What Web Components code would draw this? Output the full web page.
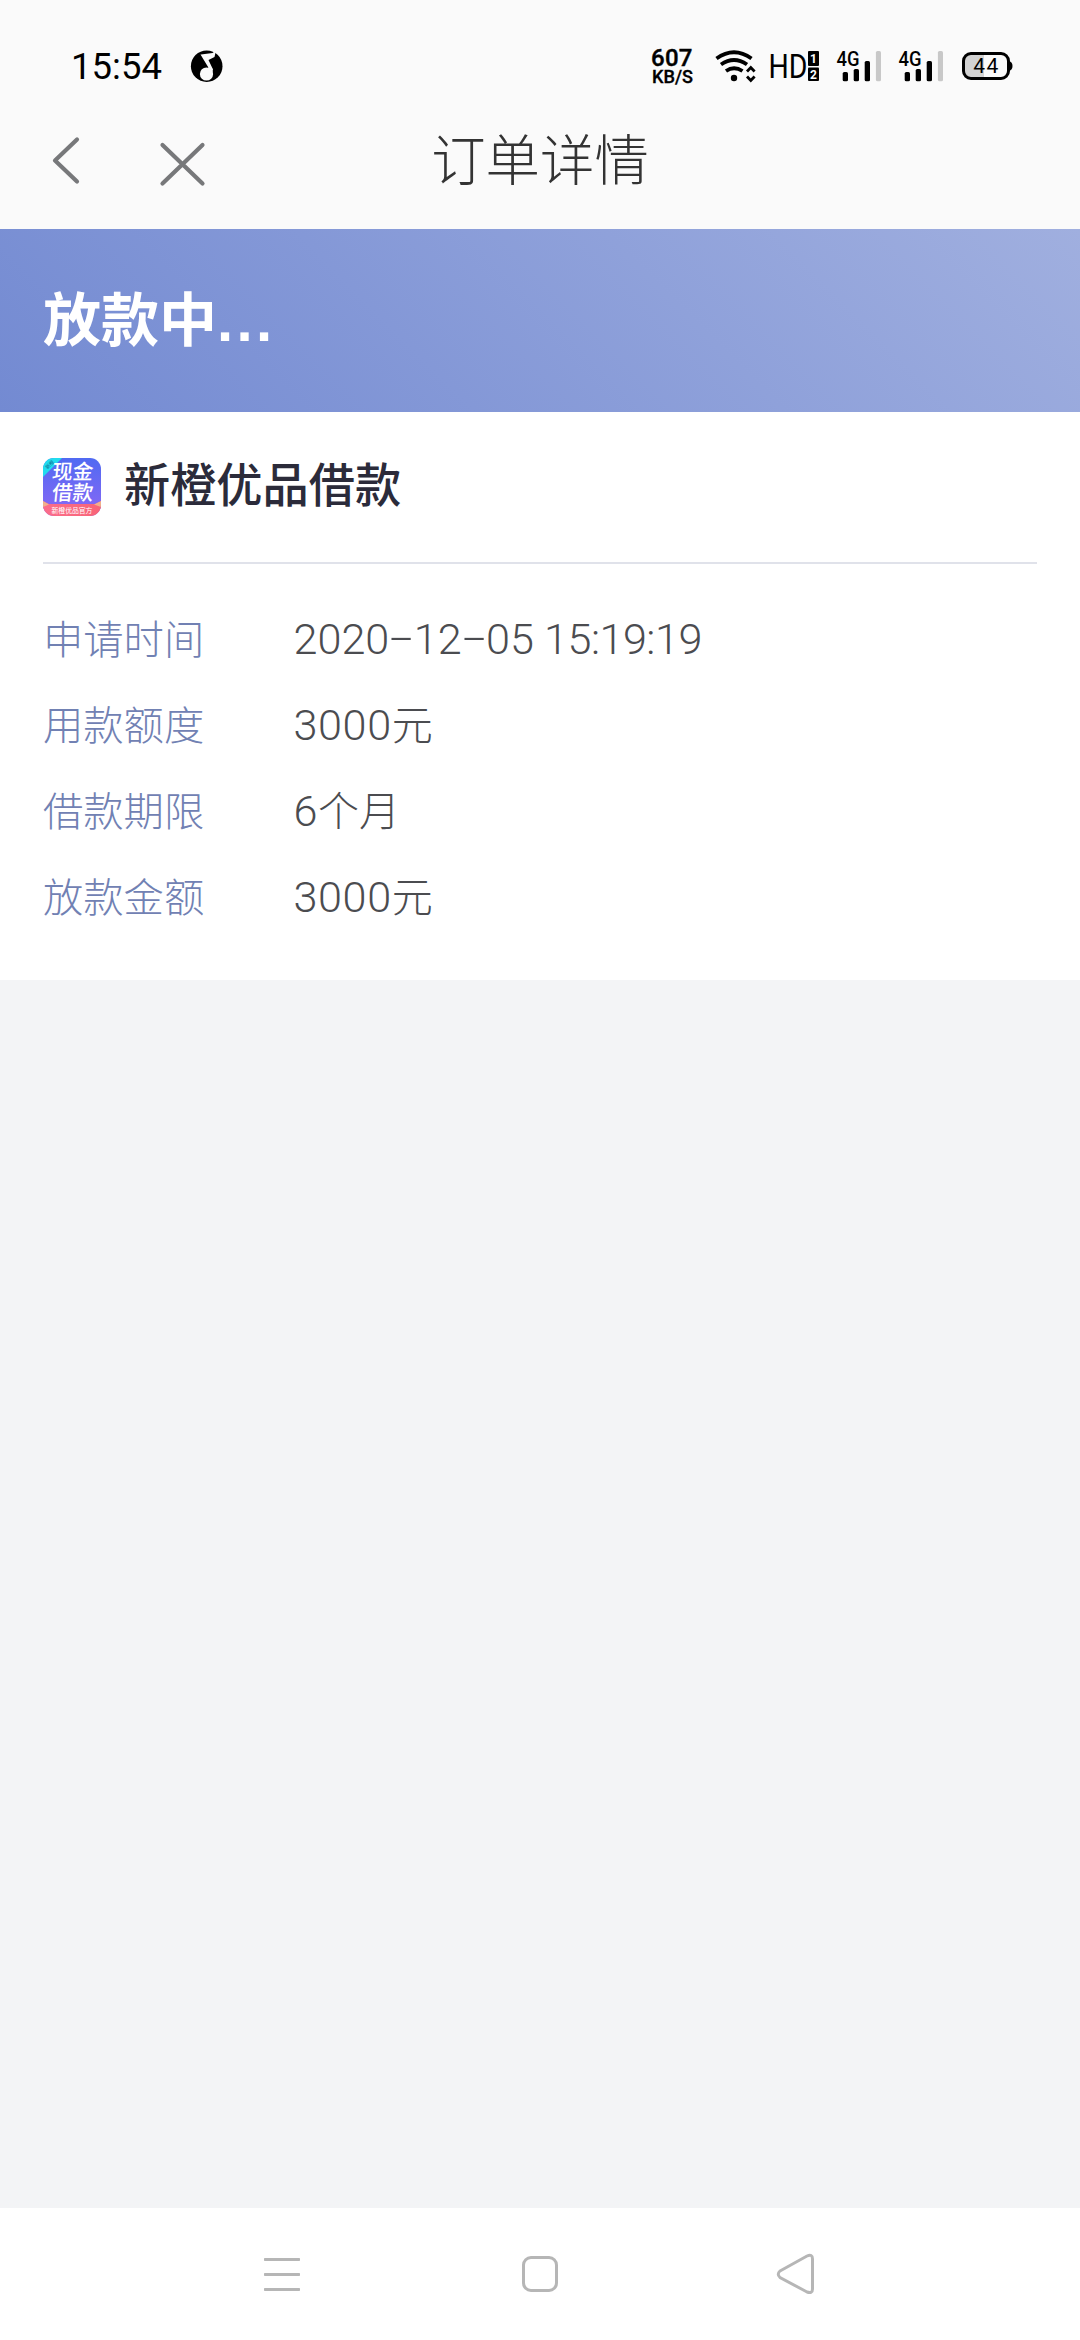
<!DOCTYPE html>
<html lang="zh-CN">
<head>
<meta charset="utf-8">
<title>订单详情</title>
<style>
    body {
        margin: 0;
        background: #f3f4f6;
        font-family: Roboto, "Noto Sans CJK SC", sans-serif;
    }
</style>
</head>
<body>
<order-page></order-page>

<script>
class StatusBar extends HTMLElement {
    constructor() {
        super();
        this.attachShadow({ mode: 'open' });
    }

    connectedCallback() {
        this.shadowRoot.innerHTML = `
            <style>
                :host {
                    display: flex;
                    justify-content: space-between;
                    height: 110px;
                    padding: 0 65px 0 70px;
                    box-sizing: border-box;
                    background: #fafafa;
                }
                .side {
                    display: flex;
                    align-items: flex-start;
                    padding-top: 36px;
                }
                svg { display: block; }
            </style>
            <div class="side">
                <svg width="114" height="60" viewBox="70 36 114 60">
                    <text x="71" y="79" font-size="36.5" textLength="91" lengthAdjust="spacing">15:54</text>
                </svg>
                <svg width="40" height="60" viewBox="184 36 40 60">
                    <circle cx="206.7" cy="66.2" r="15.8"/>
                    <path d="M201 54.5 L212.5 53 L216 50.5 L214.5 57 L208.5 60 L213 69.5 L209 68.5 L200.5 54.5Z" fill="#fafafa"/>
                    <circle cx="206.5" cy="74" r="6.6" fill="#fafafa"/>
                    <path d="M208 67 L213 69 L212 75Z" fill="#fafafa"/>
                </svg>
            </div>
            <div class="side">
                <svg width="62" height="60" viewBox="647 36 62 60">
                    <text x="650" y="66" font-size="24" font-weight="500" stroke="#000" stroke-width=".4" textLength="41.5">607</text>
                    <text x="651" y="83" font-size="17.5" font-weight="500" stroke="#000" stroke-width=".3" textLength="41" lengthAdjust="spacingAndGlyphs">KB/S</text>
                </svg>
                <svg width="54" height="60" viewBox="709 36 54 60" fill="none" stroke="#000" stroke-width="3.8">
                    <path d="M715.5 58.5 Q733 46 750.5 58.5"/>
                    <path d="M720 64.5 Q733 55.5 746 64.5"/>
                    <path d="M725 71 Q733 65.5 741.5 71"/>
                    <circle cx="733" cy="78" r="3.2" fill="#000" stroke="none"/>
                    <path d="M746 71.5 L749.8 67.5 L753.6 71.5 M746 76.5 L749.8 80.5 L753.6 76.5" stroke-width="2.8"/>
                </svg>
                <svg width="67" height="60" viewBox="763 36 67 60">
                    <text x="767.5" y="78" font-size="33.5" textLength="39" lengthAdjust="spacingAndGlyphs">HD</text>
                    <rect x="807" y="51" width="11" height="15" rx="1"/>
                    <rect x="807" y="67.5" width="11" height="13.5" rx="1"/>
                    <text x="812.5" y="63" font-size="12" font-weight="700" fill="#fff" text-anchor="middle">1</text>
                    <text x="812.5" y="78.5" font-size="12" font-weight="700" fill="#fff" text-anchor="middle">2</text>
                </svg>
                <signal-bars></signal-bars>
                <signal-bars></signal-bars>
                <svg width="60" height="60" viewBox="954 36 60 60">
                    <rect x="962.5" y="53.5" width="45" height="25" rx="7.5" fill="#fafafa"/>
                    <path d="M983 54 V78 H970 Q963 78 963 71 V61 Q963 54 970 54Z" fill="#d2d2d2"/>
                    <rect x="962.5" y="53.5" width="45" height="25" rx="7.5" fill="none" stroke="#000" stroke-width="3"/>
                    <path d="M1008 61 Q1011.5 62 1011.5 66 Q1011.5 70 1008 71Z"/>
                    <text x="984.8" y="73" font-size="21" text-anchor="middle" textLength="25">44</text>
                </svg>
            </div>
        `;
    }
}

class SignalBars extends HTMLElement {
    constructor() {
        super();
        this.attachShadow({ mode: 'open' });
    }

    connectedCallback() {
        this.shadowRoot.innerHTML = `
            <style>
                :host { display: block; width: 62px; height: 60px; }
                svg { display: block; }
            </style>
            <svg width="62" height="60" viewBox="0 -10 62 60">
                <text x="5.5" y="19.8" font-size="20" font-weight="500" textLength="23" lengthAdjust="spacingAndGlyphs">4G</text>
                <rect x="11.7" y="26" width="5.3" height="9.3" rx="1.6"/>
                <rect x="22.7" y="23" width="5.3" height="12.3" rx="1.6"/>
                <rect x="33.7" y="15" width="5.3" height="20.3" rx="1.6"/>
                <rect x="44.9" y="5" width="5.1" height="30.3" rx="1.6" fill="#c8c8c8"/>
            </svg>
        `;
    }
}

class TitleBar extends HTMLElement {
    constructor() {
        super();
        this.attachShadow({ mode: 'open' });
    }

    connectedCallback() {
        this.shadowRoot.innerHTML = `
            <style>
                :host {
                    display: grid;
                    grid-template-columns: 1fr auto 1fr;
                    height: 119px;
                    padding: 0 44px;
                    background: #fafafa;
                }
                h1 {
                    margin: 0;
                    padding-top: 12px;
                    font-size: 54.4px;
                    line-height: 80px;
                    font-weight: 300;
                    color: #333;
                }
                svg { display: block; }
            </style>
            <svg width="180" height="100" viewBox="44 110 180 100" fill="none" stroke="#77787a" stroke-width="4.2" stroke-linecap="round" stroke-linejoin="round">
                <path d="M77 139.5 L55 160.5 L77 181.5"/>
                <path d="M162.5 145 L202.5 183.5 M202.5 145 L162.5 183.5"/>
            </svg>
            <h1><slot></slot></h1>
        `;
    }
}

class StatusBanner extends HTMLElement {
    constructor() {
        super();
        this.attachShadow({ mode: 'open' });
    }

    connectedCallback() {
        this.shadowRoot.innerHTML = `
            <style>
                :host {
                    display: block;
                    height: 183px;
                    padding: 50px 43px 0;
                    box-sizing: border-box;
                    background: linear-gradient(45deg, #738ad2, #a0afdf);
                    color: #fff;
                    font-size: 58px;
                    line-height: 84px;
                    font-weight: 700;
                }
                /* square full stops */
                .dots {
                    font-family: "Liberation Sans", sans-serif;
                    letter-spacing: 3.4px;
                }
            </style>
            <span><slot></slot></span><span class="dots">...</span>
        `;
    }
}

class LoanLogo extends HTMLElement {
    constructor() {
        super();
        this.attachShadow({ mode: 'open' });
    }

    connectedCallback() {
        this.shadowRoot.innerHTML = `
            <style>
                :host { display: block; width: 58px; height: 58px; }
                svg { display: block; }
            </style>
            <svg width="58" height="58" viewBox="0 0 58 58" fill="#fff">
                <defs>
                    <linearGradient id="bg" x1="0" y1="0" x2="0" y2="1">
                        <stop offset="0" stop-color="#506af2"/>
                        <stop offset="1" stop-color="#8a68f5"/>
                    </linearGradient>
                    <linearGradient id="strip" x1="0" y1="0" x2="1" y2="0">
                        <stop offset="0" stop-color="#fb6d8b"/>
                        <stop offset="1" stop-color="#f86476"/>
                    </linearGradient>
                    <clipPath id="clip"><rect width="58" height="58" rx="11"/></clipPath>
                </defs>
                <g clip-path="url(#clip)">
                    <rect width="58" height="58" fill="url(#bg)"/>
                    <path d="M0 0 H19 L0 19Z" fill="#22dcee"/>
                    <path d="M0 43 L6 46 H52 L58 43 V58 H0Z" fill="url(#strip)"/>
                    <path d="M0 43 L6 46.5 L0 49Z M58 43 L51 46.5 L58 49Z" fill="#f0b08c"/>
                    <text transform="translate(4.5 11.5) rotate(-45)" font-size="5" fill="#126d95">新橙</text>
                    <g font-weight="500" font-size="20.5">
                        <text transform="translate(8.5 20.5) skewX(-6)" textLength="41">现金</text>
                        <text transform="translate(8.5 41.5) skewX(-6)" textLength="41">借款</text>
                    </g>
                    <text x="8.5" y="54.5" font-size="6.9" textLength="41">新橙优品官方</text>
                </g>
            </svg>
        `;
    }
}

class DetailRow extends HTMLElement {
    constructor() {
        super();
        this.attachShadow({ mode: 'open' });
    }

    connectedCallback() {
        this.shadowRoot.innerHTML = `
            <style>
                :host {
                    display: flex;
                    align-items: baseline;
                    height: 86.2px;
                    line-height: 80px;
                    font-weight: 300;
                }
                .label {
                    width: 250.5px;
                    font-size: 40.3px;
                    color: #7181b3;
                }
                .value {
                    font-size: 43.2px;
                    color: #4b4c50;
                    letter-spacing: .6px;
                }
            </style>
            <span class="label">${this.getAttribute('label')}</span>
            <span class="value"><slot></slot></span>
        `;
    }
}

class OrderCard extends HTMLElement {
    constructor() {
        super();
        this.attachShadow({ mode: 'open' });
    }

    connectedCallback() {
        this.shadowRoot.innerHTML = `
            <style>
                :host {
                    display: block;
                    height: 568px;
                    padding: 0 43px;
                    box-sizing: border-box;
                    background: #fff;
                }
                .product {
                    display: flex;
                    align-items: center;
                    gap: 23px;
                    height: 150px;
                    border-bottom: 2px solid #e0e2ea;
                }
                h2 {
                    margin: 0 0 2px;
                    font-size: 46.2px;
                    line-height: 66px;
                    font-weight: 500;
                    color: #2b2b3a;
                }
                .rows { padding-top: 35.5px; }
            </style>
            <div class="product">
                <loan-logo></loan-logo>
                <h2>${this.getAttribute('name')}</h2>
            </div>
            <div class="rows"><slot></slot></div>
        `;
    }
}

class SystemNav extends HTMLElement {
    constructor() {
        super();
        this.attachShadow({ mode: 'open' });
    }

    connectedCallback() {
        this.shadowRoot.innerHTML = `
            <style>
                :host {
                    display: flex;
                    justify-content: space-between;
                    height: 132px;
                    padding: 42px 262px 0 260px;
                    box-sizing: border-box;
                    background: #fff;
                }
                svg { display: block; }
            </style>
            <svg width="44" height="48" viewBox="260 2250 44 48" fill="#b6b6b6">
                <rect x="264" y="2258" width="36" height="3" rx=".7"/>
                <rect x="264" y="2273" width="36" height="3" rx=".7"/>
                <rect x="264" y="2288" width="36" height="3" rx=".7"/>
            </svg>
            <svg width="44" height="48" viewBox="517 2250 44 48" fill="none" stroke="#b6b6b6" stroke-width="3">
                <rect x="523.5" y="2257.5" width="33" height="33" rx="7.5"/>
            </svg>
            <svg width="44" height="48" viewBox="774 2250 44 48" fill="none" stroke="#b6b6b6" stroke-width="3">
                <path d="M780 2271 L807 2256 Q812.5 2253.5 812.5 2259 V2289 Q812.5 2294 807 2292 L780 2277.5 Q776.5 2274.2 780 2271Z"/>
            </svg>
        `;
    }
}

class OrderPage extends HTMLElement {
    constructor() {
        super();
        this.attachShadow({ mode: 'open' });
    }

    connectedCallback() {
        this.shadowRoot.innerHTML = `
            <style>
                :host {
                    display: flex;
                    flex-direction: column;
                    width: 1080px;
                    height: 2340px;
                }
                system-nav { margin-top: auto; }
                .date { letter-spacing: 0; }
                .time { letter-spacing: -.5px; }
                .dash {
                    display: inline-block;
                    transform: translateY(-2px) scaleX(1.9);
                    margin: 0 6px;
                }
                .cn { font-size: 41px; letter-spacing: 0; }
            </style>
            <status-bar></status-bar>
            <title-bar>订单详情</title-bar>
            <status-banner>放款中</status-banner>
            <order-card name="新橙优品借款">
                <detail-row label="申请时间"><span class="date">2020<span class="dash">-</span>12<span class="dash">-</span>05</span><span class="time"> 15:19:19</span></detail-row>
                <detail-row label="用款额度">3000<span class="cn">元</span></detail-row>
                <detail-row label="借款期限">6<span class="cn">个月</span></detail-row>
                <detail-row label="放款金额">3000<span class="cn">元</span></detail-row>
            </order-card>
            <system-nav></system-nav>
        `;
    }
}

customElements.define('signal-bars', SignalBars);
customElements.define('status-bar', StatusBar);
customElements.define('title-bar', TitleBar);
customElements.define('status-banner', StatusBanner);
customElements.define('loan-logo', LoanLogo);
customElements.define('detail-row', DetailRow);
customElements.define('order-card', OrderCard);
customElements.define('system-nav', SystemNav);
customElements.define('order-page', OrderPage);
</script>
</body>
</html>
